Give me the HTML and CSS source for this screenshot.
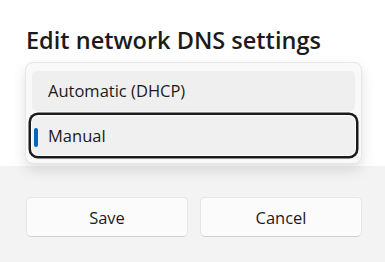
FILE: index.html
```html
<!DOCTYPE html>
<html lang="en">
<head>
  <meta charset="UTF-8">
  <meta name="viewport" content="width=device-width, initial-scale=1.0">
  <title>Edit network DNS settings</title>
  <link rel="stylesheet" href="styles.css">
</head>
<body>
  <div class="dialog">
    <div class="dialog-body">
      <h1>Edit network DNS settings</h1>

      <!-- open dropdown list, drawn over the combo box -->
      <div class="dropdown-menu">
        <div class="menu-item">Automatic (DHCP)</div>
        <div class="menu-item selected">
          <span class="indicator"></span>
          Manual
        </div>
      </div>
    </div>

    <div class="dialog-footer">
      <button class="btn">Save</button>
      <button class="btn">Cancel</button>
    </div>
  </div>
</body>
</html>
```

FILE: styles.css
```css
body {
  font-family: "Open Sans", "Noto Sans", Arial, sans-serif;
  margin: 0;
  background-color: #f3f3f3;
  color: #1b1b1b;
}
.dialog {
  width: 385px;
  height: 262px;
  display: flex;
  flex-direction: column;
}
.dialog-body {
  position: relative;
  height: 166px;
  background-color: #ffffff;
  padding: 0 26px;
  box-sizing: border-box;
}
h1 {
  margin: 0;
  padding-top: 24px;
  font-size: 23.5px;
  font-weight: 600;
  line-height: 32px;
}
.dropdown-menu {
  position: absolute;
  left: 25px;
  top: 62px;
  width: 337px;
  height: 102px;
  box-sizing: border-box;
  padding: 8px 6px;
  background-color: #f9f9f9;
  border: 1px solid #e6e6e6;
  border-radius: 8px;
  box-shadow: 0 6px 14px rgba(0,0,0,0.12);
  display: flex;
  flex-direction: column;
  gap: 5px;
}
.menu-item {
  position: relative;
  height: 40px;
  display: flex;
  align-items: center;
  padding-left: 16px;
  border-radius: 5px;
  background-color: #efefef;
  font-size: 16.5px;
}
.menu-item.selected {
  background-color: #f0f0f0;
  box-shadow: 0 0 0 1px #ffffff, 0 0 0 3.5px #1b1b1b;
  border-radius: 6px;
}
.indicator {
  position: absolute;
  left: 2px;
  top: 12px;
  width: 4px;
  height: 19px;
  border-radius: 2px;
  background-color: #0067c0;
}
.dialog-footer {
  flex: 1;
  display: flex;
  gap: 12px;
  padding: 31px 23px 0 26px;
}
.btn {
  flex: 1;
  height: 40px;
  font-family: inherit;
  font-size: 16.5px;
  color: #1b1b1b;
  background-color: #fbfbfb;
  border: 1px solid #e5e5e5;
  border-bottom-color: #d0d0d0;
  border-radius: 5px;
  cursor: pointer;
}
.btn:hover {
  background-color: #f6f6f6;
}
```
